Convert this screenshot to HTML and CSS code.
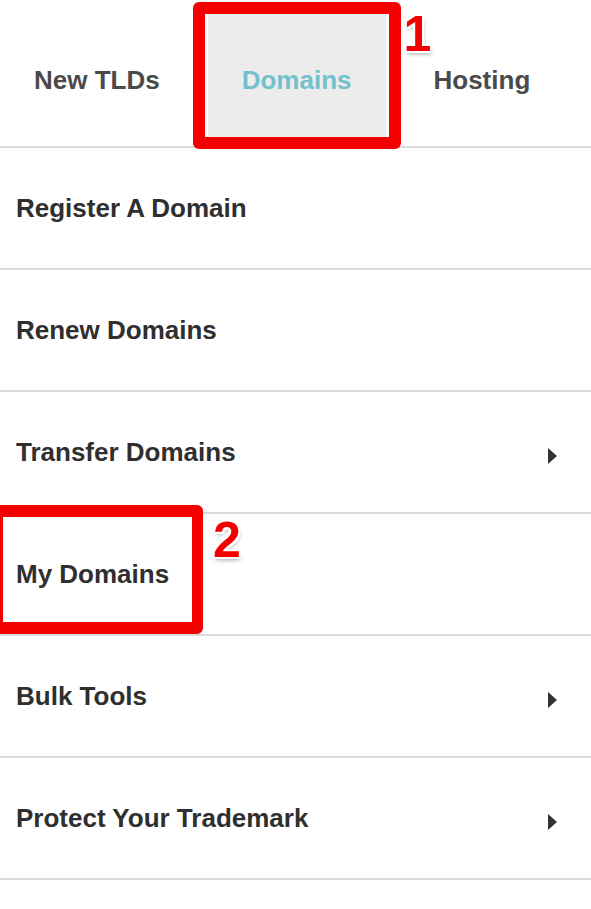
FILE: index.html
```html
<!DOCTYPE html>
<html>
	<head>
		<meta charset="UTF-8">
		<title>domains menu</title>
		<link rel="stylesheet" href="styles.css">
	</head>
	<body>
		<nav class="tabs">
			<a class="tab">New TLDs</a>
			<a class="tab active">Domains
				<span class="mark mark-tab"><span class="num num-1">1</span></span>
			</a>
			<a class="tab">Hosting</a>
		</nav>

		<ul class="menu">
			<li class="item">Register A Domain</li>
			<li class="item">Renew Domains</li>
			<li class="item has-sub">Transfer Domains <span class="caret"></span></li>
			<li class="item">My Domains
				<span class="mark mark-row"><span class="num num-2">2</span></span>
			</li>
			<li class="item has-sub">Bulk Tools <span class="caret"></span></li>
			<li class="item has-sub">Protect Your Trademark <span class="caret"></span></li>
		</ul>
	</body>
</html>
```

FILE: styles.css
```css
body { margin: 0; background: #fff; font-family: "Liberation Sans", Arial, sans-serif; font-weight: bold; }

.tabs { display: flex; gap: 14px; padding-top: 14px; height: 132px; border-bottom: 2px solid #dcdcdc; }
.tab { position: relative; display: flex; align-items: center; padding: 0 34px; font-size: 26px; color: #4a4a4a; }
.tab.active { background: #ececec; color: #74c1cc; }

.menu { list-style: none; margin: 0; padding: 0; }
.item { position: relative; display: flex; align-items: center; justify-content: space-between; height: 120px; padding: 0 34px 0 16px; border-bottom: 2px solid #dcdcdc; font-size: 26px; color: #2f2f2f; }
.caret { width: 0; height: 0; margin-top: 8px; border-top: 8px solid transparent; border-bottom: 8px solid transparent; border-left: 9px solid #333; }

/* red annotation boxes */
.mark { position: absolute; border: 12px solid #f50000; border-radius: 6px; }
.mark-tab { top: -12px; bottom: -3px; left: -15px; right: -15px; }
.mark-row { top: -9px; bottom: 0; left: -8px; width: 189px; border-width: 12px 11px; }

.num { position: absolute; font-size: 50px; line-height: 1; color: #f50000;
	text-shadow: 2px 0 #fff, -2px 0 #fff, 0 2px #fff, 0 -2px #fff, 2px 2px #fff, -2px -2px #fff, 2px -2px #fff, -2px 2px #fff, 1px 3px 4px rgba(0,0,0,.35); }
.num-1 { left: 100%; margin-left: 15px; top: -5px; }
.num-2 { left: 100%; margin-left: 21px; top: -2px; }
```
